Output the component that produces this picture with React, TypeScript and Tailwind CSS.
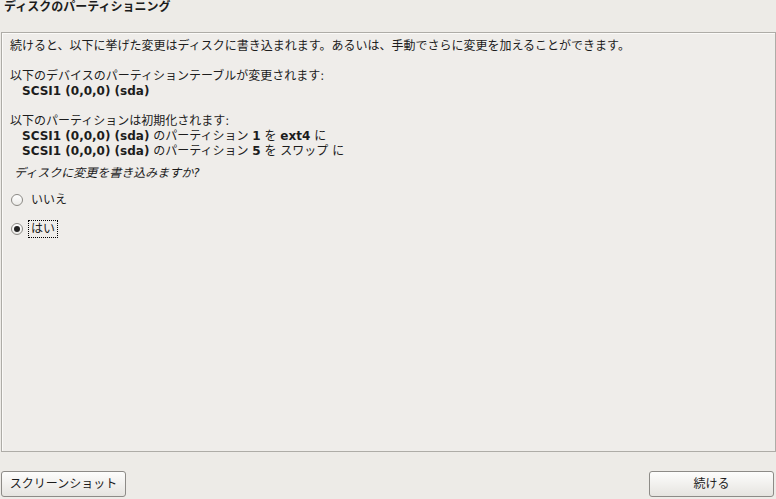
import React, { useState } from "react";

const font = { fontFamily: '"DejaVu Sans", "Noto Sans CJK JP", sans-serif' };

const B: React.FC<{ children: React.ReactNode }> = ({ children }) => (
  <span className="font-bold">{children}</span>
);

const Radio: React.FC<{
  label: string;
  checked: boolean;
  focused: boolean;
  onSelect: () => void;
}> = ({ label, checked, focused, onSelect }) => (
  <button onClick={onSelect} className="flex items-center h-[20px] text-left">
    <span className="w-[12px] h-[12px] rounded-full border border-[#8b8984] bg-gradient-to-b from-white to-[#ecebe8] flex items-center justify-center">
      {checked && <span className="w-[6px] h-[6px] rounded-full bg-[#222]" />}
    </span>
    <span
      className={
        focused
          ? "ml-[5px] px-[2px] leading-[16px] border border-dotted border-black"
          : "ml-[6px] px-[1px] leading-[16px] border border-transparent"
      }
    >
      {label}
    </span>
  </button>
);

export default function App() {
  const [answer, setAnswer] = useState<"no" | "yes">("yes");

  return (
    <div
      className="w-[776px] h-[499px] bg-[#edebe7] text-[#1c1c1c] text-[12px] flex flex-col overflow-hidden"
      style={font}
    >
      {/* Title */}
      <div className="h-[32px] pl-[4px] font-bold leading-[14px]">
        ディスクのパーティショニング
      </div>

      {/* Main panel */}
      <div className="h-[420px] ml-[1px] border border-[#aeaca7] bg-[#efedea] shadow-[inset_1px_1px_0_#fbfaf8] pt-[6px] pl-[8px]">
        <div className="leading-[15px]">
          <p>
            続けると、以下に挙げた変更はディスクに書き込まれます。あるいは、手動でさらに変更を加えることができます。
          </p>
          <p>&nbsp;</p>
          <p>以下のデバイスのパーティションテーブルが変更されます:</p>
          <p className="pl-[12px]">
            <B>SCSI1 (0,0,0) (sda)</B>
          </p>
          <p>&nbsp;</p>
          <p>以下のパーティションは初期化されます:</p>
          <p className="pl-[12px]">
            <B>SCSI1 (0,0,0) (sda)</B> のパーティション <B>1</B> を{" "}
            <B>ext4</B> に
          </p>
          <p className="pl-[12px]">
            <B>SCSI1 (0,0,0) (sda)</B> のパーティション <B>5</B> を スワップ に
          </p>
        </div>

        <p className="mt-[7px] pl-[4px] italic leading-[15px]">
          ディスクに変更を書き込みますか?
        </p>

        <div className="mt-[9px] flex flex-col gap-[9px] pl-[1px]">
          <Radio
            label="いいえ"
            checked={answer === "no"}
            focused={answer === "no"}
            onSelect={() => setAnswer("no")}
          />
          <Radio
            label="はい"
            checked={answer === "yes"}
            focused={answer === "yes"}
            onSelect={() => setAnswer("yes")}
          />
        </div>
      </div>

      {/* Footer buttons */}
      <div className="flex justify-between pt-[19px] pl-[1px] pr-[2px]">
        <button className="w-[125px] h-[26px] rounded-[3px] border border-[#8d8b87] bg-gradient-to-b from-[#fdfdfc] to-[#e6e4e0]">
          スクリーンショット
        </button>
        <button className="w-[125px] h-[26px] rounded-[3px] border border-[#8d8b87] bg-gradient-to-b from-[#fdfdfc] to-[#e6e4e0]">
          続ける
        </button>
      </div>
    </div>
  );
}
